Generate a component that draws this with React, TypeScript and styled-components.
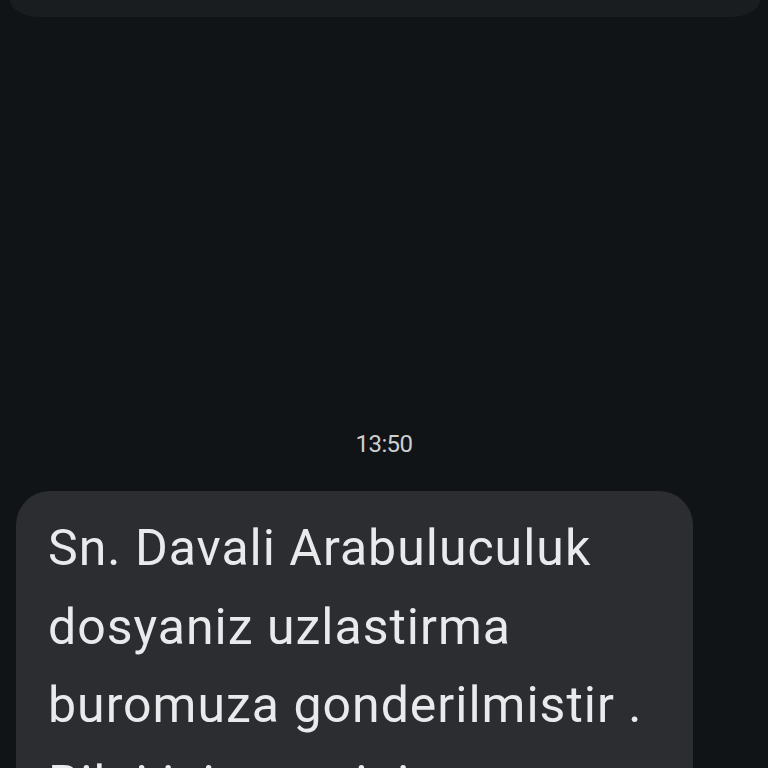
import React from "react";
import styled, { createGlobalStyle } from "styled-components";

const GlobalStyle = createGlobalStyle`
  html, body {
    margin: 0;
    padding: 0;
    background: #111417;
    overflow: hidden;
  }
  * { box-sizing: border-box; }
`;

const Screen = styled.div`
  width: 768px;
  height: 768px;
  overflow: hidden;
  display: flex;
  flex-direction: column;
  background: #111417;
  font-family: Roboto, "Noto Sans", "Liberation Sans", sans-serif;
`;

const PrevBubble = styled.div`
  flex: none;
  height: 17px;
  margin: 0 8px 0 10px;
  background: #1a1d20;
  border-radius: 0 0 30px 30px / 0 0 17px 17px;
`;

const Timestamp = styled.div`
  flex: none;
  margin-top: 415px;
  text-align: center;
  font-size: 24px;
  line-height: 24px;
  letter-spacing: -0.6px;
  color: #cdced0;
`;

const Bubble = styled.div`
  flex: none;
  margin: 35px 0 0 16px;
  width: 677px;
  padding: 18px 20px 20px 32px;
  background: #2b2d31;
  border-radius: 34px;
  color: #e9eaec;
  font-size: 50px;
  line-height: 78.5px;
  letter-spacing: 1px;
`;

const Line = styled.div`
  white-space: nowrap;
`;

const lines = [
  "Sn. Davali Arabuluculuk",
  "dosyaniz uzlastirma",
  "buromuza gonderilmistir .",
  "Bilgi icin arayiniz.",
];

export default function App() {
  return (
    <>
      <GlobalStyle />
      <Screen>
        <PrevBubble />
        <Timestamp>13:50</Timestamp>
        <Bubble>
          {lines.map((l) => (
            <Line key={l}>{l}</Line>
          ))}
        </Bubble>
      </Screen>
    </>
  );
}
